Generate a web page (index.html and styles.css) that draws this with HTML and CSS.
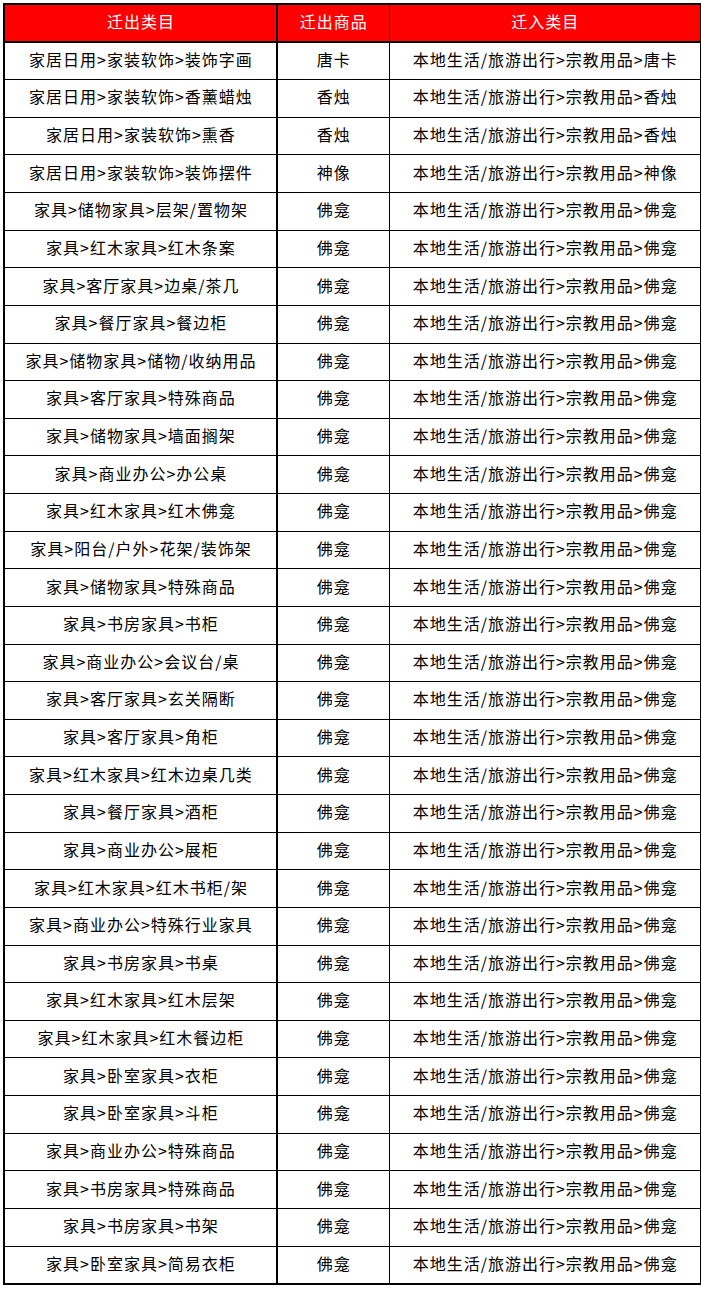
FILE: index.html
```html
<!DOCTYPE html>
<html lang="zh-CN">
<head>
<meta charset="utf-8">
<title>类目迁移</title>
<link rel="stylesheet" href="styles.css">
</head>
<body>
<table class="sheet">
  <colgroup>
    <col class="c1"><col class="c2"><col class="c3">
  </colgroup>
  <thead>
    <tr class="head"><th>迁出类目</th><th>迁出商品</th><th>迁入类目</th></tr>
  </thead>
  <tbody>
    <tr><td>家居日用&gt;家装软饰&gt;装饰字画</td><td>唐卡</td><td>本地生活/旅游出行&gt;宗教用品&gt;唐卡</td></tr>
    <tr><td>家居日用&gt;家装软饰&gt;香薰蜡烛</td><td>香烛</td><td>本地生活/旅游出行&gt;宗教用品&gt;香烛</td></tr>
    <tr><td>家居日用&gt;家装软饰&gt;熏香</td><td>香烛</td><td>本地生活/旅游出行&gt;宗教用品&gt;香烛</td></tr>
    <tr><td>家居日用&gt;家装软饰&gt;装饰摆件</td><td>神像</td><td>本地生活/旅游出行&gt;宗教用品&gt;神像</td></tr>
    <tr><td>家具&gt;储物家具&gt;层架/置物架</td><td>佛龛</td><td>本地生活/旅游出行&gt;宗教用品&gt;佛龛</td></tr>
    <tr><td>家具&gt;红木家具&gt;红木条案</td><td>佛龛</td><td>本地生活/旅游出行&gt;宗教用品&gt;佛龛</td></tr>
    <tr><td>家具&gt;客厅家具&gt;边桌/茶几</td><td>佛龛</td><td>本地生活/旅游出行&gt;宗教用品&gt;佛龛</td></tr>
    <tr><td>家具&gt;餐厅家具&gt;餐边柜</td><td>佛龛</td><td>本地生活/旅游出行&gt;宗教用品&gt;佛龛</td></tr>
    <tr><td>家具&gt;储物家具&gt;储物/收纳用品</td><td>佛龛</td><td>本地生活/旅游出行&gt;宗教用品&gt;佛龛</td></tr>
    <tr><td>家具&gt;客厅家具&gt;特殊商品</td><td>佛龛</td><td>本地生活/旅游出行&gt;宗教用品&gt;佛龛</td></tr>
    <tr><td>家具&gt;储物家具&gt;墙面搁架</td><td>佛龛</td><td>本地生活/旅游出行&gt;宗教用品&gt;佛龛</td></tr>
    <tr><td>家具&gt;商业办公&gt;办公桌</td><td>佛龛</td><td>本地生活/旅游出行&gt;宗教用品&gt;佛龛</td></tr>
    <tr><td>家具&gt;红木家具&gt;红木佛龛</td><td>佛龛</td><td>本地生活/旅游出行&gt;宗教用品&gt;佛龛</td></tr>
    <tr><td>家具&gt;阳台/户外&gt;花架/装饰架</td><td>佛龛</td><td>本地生活/旅游出行&gt;宗教用品&gt;佛龛</td></tr>
    <tr><td>家具&gt;储物家具&gt;特殊商品</td><td>佛龛</td><td>本地生活/旅游出行&gt;宗教用品&gt;佛龛</td></tr>
    <tr><td>家具&gt;书房家具&gt;书柜</td><td>佛龛</td><td>本地生活/旅游出行&gt;宗教用品&gt;佛龛</td></tr>
    <tr><td>家具&gt;商业办公&gt;会议台/桌</td><td>佛龛</td><td>本地生活/旅游出行&gt;宗教用品&gt;佛龛</td></tr>
    <tr><td>家具&gt;客厅家具&gt;玄关隔断</td><td>佛龛</td><td>本地生活/旅游出行&gt;宗教用品&gt;佛龛</td></tr>
    <tr><td>家具&gt;客厅家具&gt;角柜</td><td>佛龛</td><td>本地生活/旅游出行&gt;宗教用品&gt;佛龛</td></tr>
    <tr><td>家具&gt;红木家具&gt;红木边桌几类</td><td>佛龛</td><td>本地生活/旅游出行&gt;宗教用品&gt;佛龛</td></tr>
    <tr><td>家具&gt;餐厅家具&gt;酒柜</td><td>佛龛</td><td>本地生活/旅游出行&gt;宗教用品&gt;佛龛</td></tr>
    <tr><td>家具&gt;商业办公&gt;展柜</td><td>佛龛</td><td>本地生活/旅游出行&gt;宗教用品&gt;佛龛</td></tr>
    <tr><td>家具&gt;红木家具&gt;红木书柜/架</td><td>佛龛</td><td>本地生活/旅游出行&gt;宗教用品&gt;佛龛</td></tr>
    <tr><td>家具&gt;商业办公&gt;特殊行业家具</td><td>佛龛</td><td>本地生活/旅游出行&gt;宗教用品&gt;佛龛</td></tr>
    <tr><td>家具&gt;书房家具&gt;书桌</td><td>佛龛</td><td>本地生活/旅游出行&gt;宗教用品&gt;佛龛</td></tr>
    <tr><td>家具&gt;红木家具&gt;红木层架</td><td>佛龛</td><td>本地生活/旅游出行&gt;宗教用品&gt;佛龛</td></tr>
    <tr><td>家具&gt;红木家具&gt;红木餐边柜</td><td>佛龛</td><td>本地生活/旅游出行&gt;宗教用品&gt;佛龛</td></tr>
    <tr><td>家具&gt;卧室家具&gt;衣柜</td><td>佛龛</td><td>本地生活/旅游出行&gt;宗教用品&gt;佛龛</td></tr>
    <tr><td>家具&gt;卧室家具&gt;斗柜</td><td>佛龛</td><td>本地生活/旅游出行&gt;宗教用品&gt;佛龛</td></tr>
    <tr><td>家具&gt;商业办公&gt;特殊商品</td><td>佛龛</td><td>本地生活/旅游出行&gt;宗教用品&gt;佛龛</td></tr>
    <tr><td>家具&gt;书房家具&gt;特殊商品</td><td>佛龛</td><td>本地生活/旅游出行&gt;宗教用品&gt;佛龛</td></tr>
    <tr><td>家具&gt;书房家具&gt;书架</td><td>佛龛</td><td>本地生活/旅游出行&gt;宗教用品&gt;佛龛</td></tr>
    <tr><td>家具&gt;卧室家具&gt;简易衣柜</td><td>佛龛</td><td>本地生活/旅游出行&gt;宗教用品&gt;佛龛</td></tr>
  </tbody>
</table>
</body>
</html>
```

FILE: styles.css
```css
html, body {
  margin: 0;
  padding: 0;
  background: #ffffff;
}

body {
  padding: 3px 0 0 3px;
  font-family: "Noto Sans CJK SC", "Noto Sans", "Liberation Sans", sans-serif;
  font-size: 16px;
  color: #000000;
}

.sheet {
  border-collapse: collapse;
  table-layout: fixed;
  width: 697px;
  border: 2px solid #000;
}

.c1 { width: 273px; }
.c2 { width: 112px; }
.c3 { width: 312px; }

.sheet th,
.sheet td {
  padding: 0 0 4px 1px;
  text-align: center;
  vertical-align: middle;
  white-space: nowrap;
  line-height: 20px;
  letter-spacing: 1px;
  border: 1px solid #000;
}

.sheet th:first-child,
.sheet td:first-child {
  border-right: 2px solid #000;
}

.head th {
  background: #ff0000;
  color: #ffffff;
  font-weight: normal;
  height: 32px;
  border-bottom: 2px solid #000;
}

.sheet tbody tr {
  height: 37.64px;
}
```
